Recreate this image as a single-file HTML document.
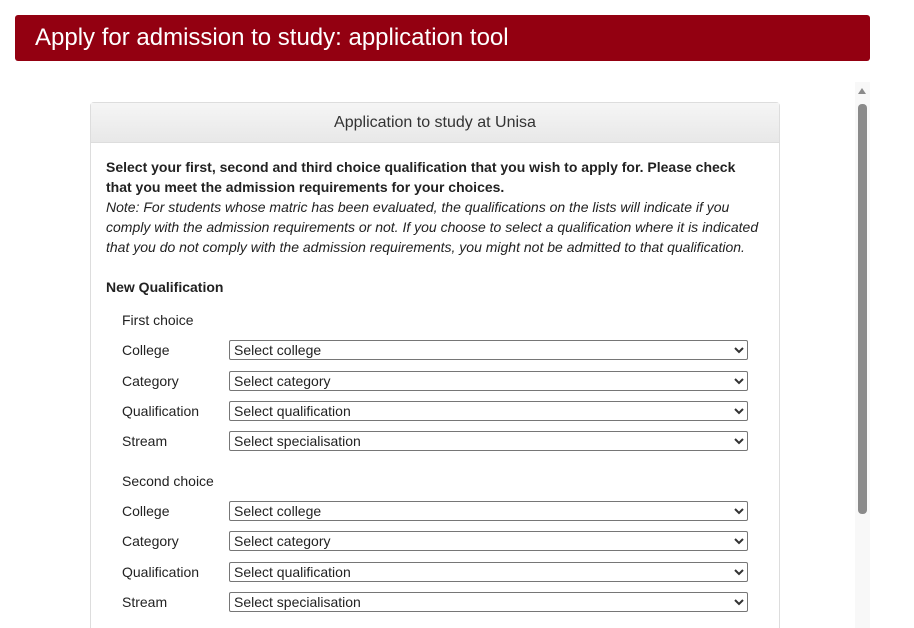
<!DOCTYPE html>
<html><head><style>
html,body{margin:0;width:914px;height:628px;overflow:hidden}
body{background:#fff;font-family:"Liberation Sans",Arial,sans-serif;color:#222;position:relative}
.ban{position:absolute;left:15px;top:15px;width:855px;height:46px;background:#930011;border-radius:3px;color:#fff;font-size:24px;line-height:46px;padding-left:20px;box-sizing:border-box}
.track{position:absolute;left:855px;top:82px;width:15px;height:546px;background:#f8f8f8}
.thumb{position:absolute;left:858px;top:104px;width:9px;height:410px;background:#8a8a8a;border-radius:4px}
.arr{position:absolute;left:858px;top:88px;width:0;height:0;border-left:4px solid transparent;border-right:4px solid transparent;border-bottom:6px solid #8a8a8a}
.panel{position:absolute;left:90px;top:102px;width:690px;height:540px;border:1px solid #ddd;border-radius:4px;box-sizing:border-box}
.ph{height:39px;background:linear-gradient(#f5f5f5,#e8e8e8);border-bottom:1px solid #ddd;text-align:center;font-size:16px;line-height:40px;color:#333}
.t{position:absolute;font-size:14px;line-height:20px;white-space:nowrap}
.i{font-style:italic;font-size:14px}
.sel{position:absolute;left:229px;width:519px;height:20px;border:1px solid #767676;border-radius:2px;box-sizing:border-box;font-size:14px;line-height:18px;padding-left:4px;color:#222}
.sel svg{position:absolute;right:3px;top:5px}
</style></head><body>
<div class="ban">Apply for admission to study: application tool</div>
<div class="track"></div><div class="arr"></div><div class="thumb"></div>
<div class="panel"><div class="ph">Application to study at Unisa</div></div>
<div class="t" style="left:106px;top:157px;font-weight:bold">Select your first, second and third choice qualification that you wish to apply for. Please check</div>
<div class="t" style="left:106px;top:177px;font-weight:bold">that you meet the admission requirements for your choices.</div>
<div class="t i" style="left:106px;top:197px">Note: For students whose matric has been evaluated, the qualifications on the lists will indicate if you</div>
<div class="t i" style="left:106px;top:217px">comply with the admission requirements or not. If you choose to select a qualification where it is indicated</div>
<div class="t i" style="left:106px;top:237px">that you do not comply with the admission requirements, you might not be admitted to that qualification.</div>
<div class="t" style="left:106px;top:277px;font-weight:bold">New Qualification</div>
<div class="t" style="left:122px;top:310px">First choice</div>
<div class="t" style="left:122px;top:340px">College</div><div class="sel" style="top:340px">Select college<svg width="10" height="8"><path d="M1 2l4 4 4-4" stroke="#333" stroke-width="2" fill="none"/></svg></div>
<div class="t" style="left:122px;top:371px">Category</div><div class="sel" style="top:371px">Select category<svg width="10" height="8"><path d="M1 2l4 4 4-4" stroke="#333" stroke-width="2" fill="none"/></svg></div>
<div class="t" style="left:122px;top:401px">Qualification</div><div class="sel" style="top:401px">Select qualification<svg width="10" height="8"><path d="M1 2l4 4 4-4" stroke="#333" stroke-width="2" fill="none"/></svg></div>
<div class="t" style="left:122px;top:431px">Stream</div><div class="sel" style="top:431px">Select specialisation<svg width="10" height="8"><path d="M1 2l4 4 4-4" stroke="#333" stroke-width="2" fill="none"/></svg></div>
<div class="t" style="left:122px;top:471px">Second choice</div>
<div class="t" style="left:122px;top:501px">College</div><div class="sel" style="top:501px">Select college<svg width="10" height="8"><path d="M1 2l4 4 4-4" stroke="#333" stroke-width="2" fill="none"/></svg></div>
<div class="t" style="left:122px;top:531px">Category</div><div class="sel" style="top:531px">Select category<svg width="10" height="8"><path d="M1 2l4 4 4-4" stroke="#333" stroke-width="2" fill="none"/></svg></div>
<div class="t" style="left:122px;top:562px">Qualification</div><div class="sel" style="top:562px">Select qualification<svg width="10" height="8"><path d="M1 2l4 4 4-4" stroke="#333" stroke-width="2" fill="none"/></svg></div>
<div class="t" style="left:122px;top:592px">Stream</div><div class="sel" style="top:592px">Select specialisation<svg width="10" height="8"><path d="M1 2l4 4 4-4" stroke="#333" stroke-width="2" fill="none"/></svg></div>
</body></html>
